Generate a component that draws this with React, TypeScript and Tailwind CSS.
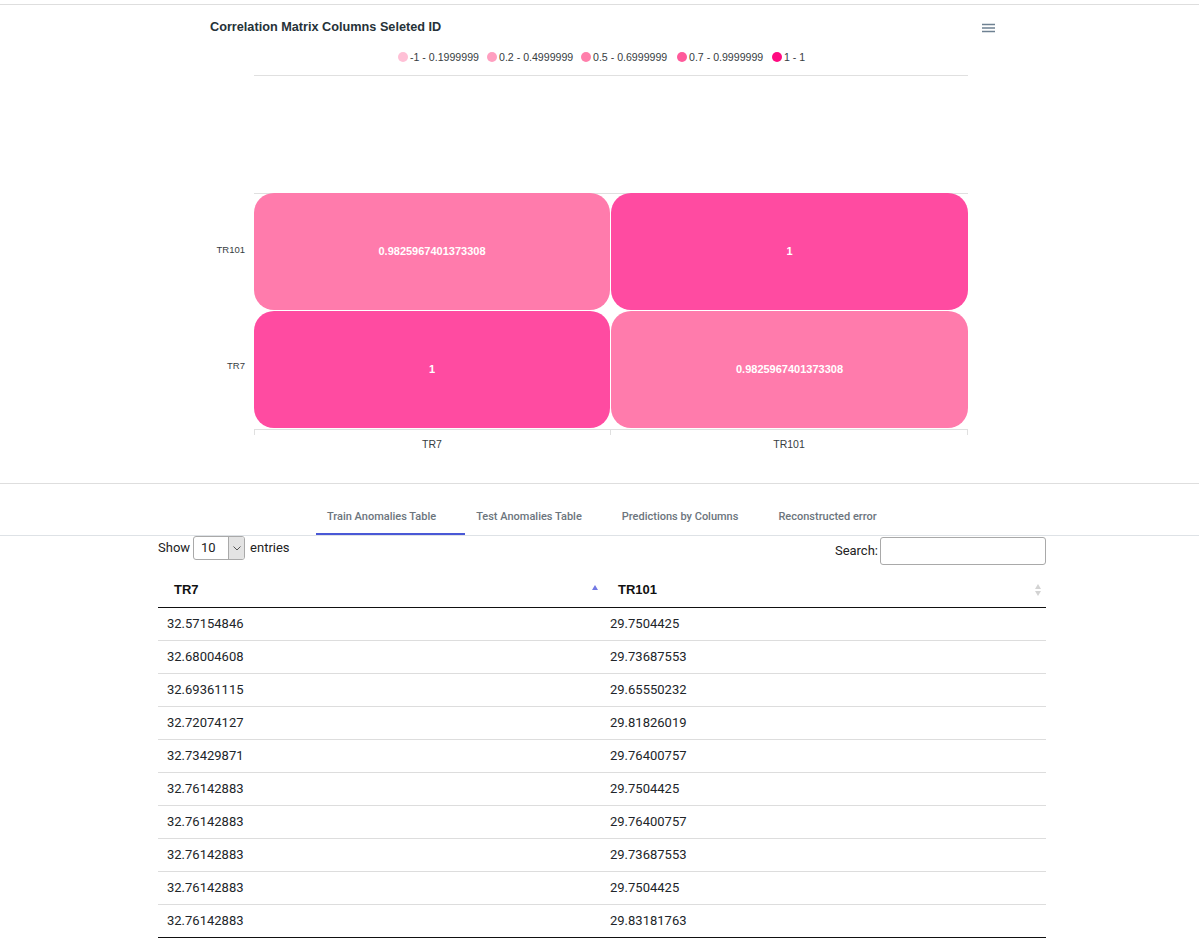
import React from "react";

const rows: [string, string][] = [
  ["32.57154846", "29.7504425"],
  ["32.68004608", "29.73687553"],
  ["32.69361115", "29.65550232"],
  ["32.72074127", "29.81826019"],
  ["32.73429871", "29.76400757"],
  ["32.76142883", "29.7504425"],
  ["32.76142883", "29.76400757"],
  ["32.76142883", "29.73687553"],
  ["32.76142883", "29.7504425"],
  ["32.76142883", "29.83181763"],
];

const legend = [
  { c: "#ffc0d6", cx: 203, tx: 210, t: "-1 - 0.1999999" },
  { c: "#ff9fc0", cx: 292, tx: 299, t: "0.2 - 0.4999999" },
  { c: "#ff7fab", cx: 386, tx: 393, t: "0.5 - 0.6999999" },
  { c: "#ff5a9b", cx: 482, tx: 489, t: "0.7 - 0.9999999" },
  { c: "#ff0a80", cx: 577, tx: 584, t: "1 - 1" },
];

const LIGHT = "#ff7bac";
const DARK = "#ff4ba1";
const chartFont = "'Liberation Sans', Arial, Helvetica, sans-serif";

function Chart() {
  return (
    <svg width={800} height={478} style={{ fontFamily: chartFont }}>
      <text x={10} y={26} fontSize={12.7} fontWeight={700} fill="#263238">
        Correlation Matrix Columns Seleted ID
      </text>
      <g stroke="#6e8192" strokeWidth={1.5}>
        <line x1={782} y1={19.5} x2={795} y2={19.5} />
        <line x1={782} y1={23} x2={795} y2={23} />
        <line x1={782} y1={26.5} x2={795} y2={26.5} />
      </g>
      {legend.map((l) => (
        <g key={l.t}>
          <circle cx={l.cx} cy={52} r={5} fill={l.c} />
          <text x={l.tx} y={56} fontSize={10.6} fill="#373d3f">
            {l.t}
          </text>
        </g>
      ))}
      <line x1={54} y1={70.5} x2={768} y2={70.5} stroke="#e0e0e0" />
      <line x1={54} y1={188.5} x2={768} y2={188.5} stroke="#e0e0e0" />
      <rect x={54} y={188} width={356} height={117} rx={20} fill={LIGHT} />
      <rect x={411} y={188} width={357} height={117} rx={20} fill={DARK} />
      <rect x={54} y={306} width={356} height={117} rx={20} fill={DARK} />
      <rect x={411} y={306} width={357} height={117} rx={20} fill={LIGHT} />
      <g fontSize={11} fontWeight={700} fill="#ffffff" textAnchor="middle">
        <text x={232} y={250}>0.9825967401373308</text>
        <text x={589.5} y={250}>1</text>
        <text x={232} y={368}>1</text>
        <text x={589.5} y={368}>0.9825967401373308</text>
      </g>
      <g fontSize={9.5} fill="#373d3f" textAnchor="end">
        <text x={45} y={248}>TR101</text>
        <text x={45} y={364}>TR7</text>
      </g>
      <line x1={54} y1={424.5} x2={768} y2={424.5} stroke="#e0e0e0" />
      <g stroke="#e0e0e0">
        <line x1={54.5} y1={424} x2={54.5} y2={430} />
        <line x1={410.5} y1={424} x2={410.5} y2={430} />
        <line x1={767.5} y1={424} x2={767.5} y2={430} />
      </g>
      <g fontSize={10.5} fill="#373d3f" textAnchor="middle">
        <text x={232} y={443}>TR7</text>
        <text x={589} y={443}>TR101</text>
      </g>
    </svg>
  );
}

function SortUp() {
  return (
    <svg width={6} height={5} viewBox="0 0 6 5">
      <path d="M3 0 L6 5 L0 5 Z" fill="#7379e4" />
    </svg>
  );
}

function SortBoth() {
  return (
    <svg width={6} height={12} viewBox="0 0 6 12">
      <path d="M3 0 L6 5 L0 5 Z" fill="#d3d3d3" />
      <path d="M0 7 L6 7 L3 12 Z" fill="#d3d3d3" />
    </svg>
  );
}

const tabs = [
  "Train Anomalies Table",
  "Test Anomalies Table",
  "Predictions by Columns",
  "Reconstructed error",
];

export default function App() {
  return (
    <div
      className="w-[1199px] min-h-[943px] bg-white overflow-hidden"
      style={{ fontFamily: "Roboto, 'Liberation Sans', Arial, sans-serif" }}
    >
      <div className="pt-[4px]">
        <div className="border-t border-[#dedede]">
          <div className="ml-[200px] w-[800px] h-[478px]">
            <Chart />
          </div>
        </div>
      </div>
      <div className="border-t border-[#dedede]">
        <div className="h-[52px] border-b border-[#dee2e6] flex pl-[316px]">
          {tabs.map((t, i) => (
            <div
              key={t}
              className={
                "h-full flex items-center pt-[17px] pl-[11px] pr-[29px] text-[11px] font-medium text-[#6c757d] " +
                (i === 0 ? "border-b-2 border-[#4a58d6]" : "border-b-2 border-transparent")
              }
            >
              {t}
            </div>
          ))}
        </div>
        <div className="ml-[158px] w-[888px]">
          <div className="flex justify-between items-start text-[13px] text-[#222]">
            <div className="flex items-center h-[24px]">
              <span>Show</span>
              <div className="ml-[3px] w-[52px] h-[24px] border border-[#a9a9a9] rounded-[3px] flex overflow-hidden">
                <div className="flex-1 flex items-center pl-[7px] text-[13px]">10</div>
                <div className="w-[16px] bg-[#e3e3e3] border-l border-[#a9a9a9] flex items-center justify-center">
                  <svg width={8} height={5} viewBox="0 0 8 5">
                    <path d="M0.5 0.5 L4 4 L7.5 0.5" fill="none" stroke="#555" strokeWidth={1} />
                  </svg>
                </div>
              </div>
              <span className="ml-[5px]">entries</span>
            </div>
            <div className="flex items-center h-[28px] mt-[1px]">
              <span>Search:</span>
              <div className="ml-[2px] w-[166px] h-[28px] border border-[#a9a9a9] rounded-[3px] bg-white" />
            </div>
          </div>
          <div className="mt-[7px]">
            <div className="flex h-[36px] border-b border-[#111]">
              <div
                className="w-[443px] flex items-center justify-between pl-[16px] pr-[3px] text-[13px] font-bold text-[#111]"
                style={{ fontFamily: "'Liberation Sans', Arial, sans-serif" }}
              >
                <span>TR7</span>
                <span className="mb-[4px]">
                  <SortUp />
                </span>
              </div>
              <div
                className="flex-1 flex items-center justify-between pl-[17px] pr-[5px] text-[13px] font-bold text-[#111]"
                style={{ fontFamily: "'Liberation Sans', Arial, sans-serif" }}
              >
                <span>TR101</span>
                <SortBoth />
              </div>
            </div>
            {rows.map((r, i) => (
              <div
                key={i}
                className={
                  "flex h-[33px] border-b text-[13px] text-[#212529] " +
                  (i === rows.length - 1 ? "border-[#111]" : "border-[#dddddd]")
                }
              >
                <div className="w-[443px] flex items-center pl-[9px]">{r[0]}</div>
                <div className="flex-1 flex items-center pl-[9px]">{r[1]}</div>
              </div>
            ))}
          </div>
        </div>
      </div>
    </div>
  );
}
